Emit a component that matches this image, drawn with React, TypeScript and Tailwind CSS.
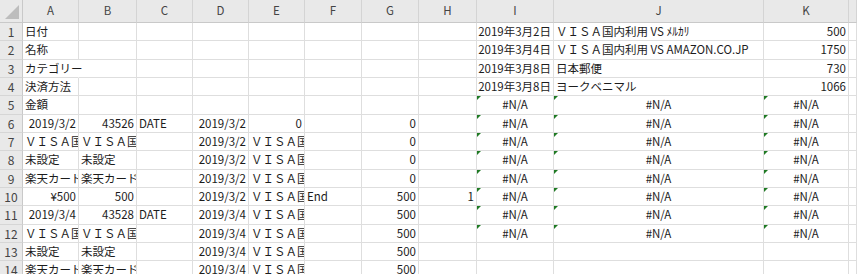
import React from "react";

type Cell = { v: string; a?: "r" | "c"; tri?: boolean; spill?: boolean };
type Row = Partial<Record<string, Cell>>;

const cols = ["A", "B", "C", "D", "E", "F", "G", "H", "I", "J", "K", "L"];

const t = (v: string): Cell => ({ v });
const r = (v: string): Cell => ({ v, a: "r" });
const na: Cell = { v: "#N/A", a: "c", tri: true };
const visa = t("ＶＩＳＡ国内利用");
const errs = { I: na, J: na, K: na };

const rows: Row[] = [
  { A: t("日付"), I: r("2019年3月2日"), J: t("ＶＩＳＡ国内利用 VS ﾒﾙｶﾘ"), K: r("500") },
  { A: t("名称"), I: r("2019年3月4日"), J: t("ＶＩＳＡ国内利用 VS AMAZON.CO.JP"), K: r("1750") },
  { A: { v: "カテゴリー", spill: true }, I: r("2019年3月8日"), J: t("日本郵便"), K: r("730") },
  { A: t("決済方法"), I: r("2019年3月8日"), J: t("ヨークベニマル"), K: r("1066") },
  { A: t("金額"), ...errs },
  { A: r("2019/3/2"), B: r("43526"), C: t("DATE"), D: r("2019/3/2"), E: r("0"), G: r("0"), ...errs },
  { A: visa, B: visa, D: r("2019/3/2"), E: visa, G: r("0"), ...errs },
  { A: t("未設定"), B: t("未設定"), D: r("2019/3/2"), E: visa, G: r("0"), ...errs },
  { A: t("楽天カード"), B: t("楽天カード"), D: r("2019/3/2"), E: visa, G: r("0"), ...errs },
  { A: r("¥500"), B: r("500"), D: r("2019/3/2"), E: visa, F: t("End"), G: r("500"), H: r("1"), ...errs },
  { A: r("2019/3/4"), B: r("43528"), C: t("DATE"), D: r("2019/3/4"), E: visa, G: r("500"), ...errs },
  { A: visa, B: visa, D: r("2019/3/4"), E: visa, G: r("500"), ...errs },
  { A: t("未設定"), B: t("未設定"), D: r("2019/3/4"), E: visa, G: r("500") },
  { A: t("楽天カード"), B: t("楽天カード"), D: r("2019/3/4"), E: visa, G: r("500") },
];

const DataCell = ({ cell }: { cell?: Cell }) => {
  const align =
    cell?.a === "r" ? "justify-end" : cell?.a === "c" ? "justify-center" : "justify-start";
  const edge = cell?.spill
    ? "overflow-visible border-r-transparent"
    : "overflow-hidden";
  return (
    <div
      className={`relative flex items-center px-[2px] whitespace-nowrap border-r border-b border-[#dedede] ${edge} ${align}`}
    >
      {cell?.tri && (
        <span className="absolute top-0 -left-px w-0 h-0 border-t-[5px] border-t-[#1f7a24] border-r-[5px] border-r-transparent" />
      )}
      {cell?.v}
    </div>
  );
};

const App = () => {
  return (
    <div className="w-[857px] h-[274px] overflow-hidden bg-white font-['Noto_Sans_CJK_JP',sans-serif] text-[11.5px] text-[#1c1c1c]">
      <div className="grid grid-cols-[23px_56px_58px_56px_56px_56px_57px_57px_58px_77px_210px_85px_1fr] grid-rows-[23px_18px_19px_18px_18px_19px_18px_18px_19px_18px_18px_19px_18px_18px_18px]">
        <div className="relative bg-[#e9e9e9] border-r border-b border-[#c9c9c9]">
          <svg className="absolute right-[3px] bottom-[3px]" width="14" height="14" viewBox="0 0 14 14">
            <polygon points="14,0 14,14 0,14" fill="#bdbdbd" />
          </svg>
        </div>
        {cols.map((c) => (
          <div
            key={c}
            className="flex items-center justify-center bg-[#e9e9e9] text-[#444] border-r border-b border-r-[#d4d4d4] border-b-[#c9c9c9]"
          >
            {c === "L" ? "" : c}
          </div>
        ))}

        {rows.map((row, i) => (
          <React.Fragment key={i}>
            <div className="flex items-center justify-center bg-[#e9e9e9] text-[12px] text-[#444] border-r border-b border-r-[#c9c9c9] border-b-[#d6d6d6]">
              {i + 1}
            </div>
            {cols.map((c) => (
              <DataCell key={c} cell={row[c]} />
            ))}
          </React.Fragment>
        ))}
      </div>
    </div>
  );
};

export default App;
